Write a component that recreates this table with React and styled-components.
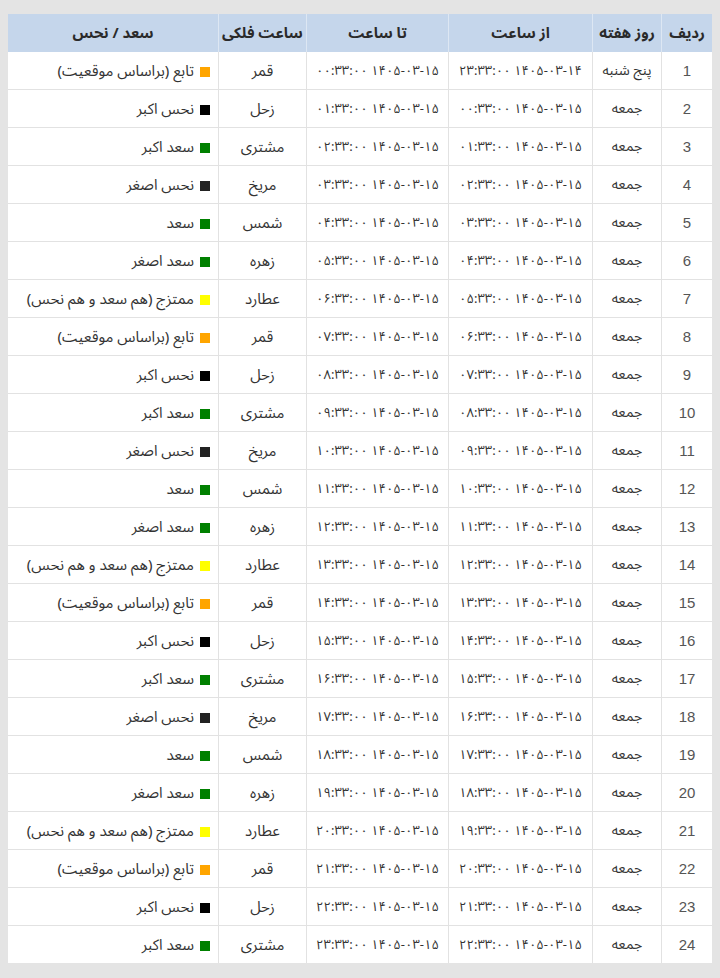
import React from "react";
import styled, { createGlobalStyle } from "styled-components";

const Global = createGlobalStyle`
  html, body { margin: 0; padding: 0; background: #e4e4e4; }
  body { font-family: "Noto Sans Arabic", "DejaVu Sans", sans-serif; }
`;

const Page = styled.div`
  padding: 14px 8px 12px 8px;
  direction: rtl;
`;

const Table = styled.table`
  width: 704px;
  border-collapse: collapse;
  table-layout: fixed;
  background: #ffffff;
  color: #333;
  font-size: 14px;
`;

const Th = styled.th`
  width: ${(p) => (p.$w ? `${p.$w}px` : "auto")};
  height: 38px;
  padding: 0;
  background: #c5d6eb;
  font-weight: bold;
  font-size: 15px;
  color: #2a2a2a;
  text-align: center;
  border-left: 1px solid #dde7f3;
  &:last-child { border-left: none; }
`;

const Tr = styled.tr`
  border-bottom: 1px solid #e2e2e2;
  &:last-child { border-bottom: none; }
`;

const Td = styled.td`
  height: 37px;
  padding: 0 ${(p) => (p.$right ? "8px" : "4px")};
  text-align: ${(p) => (p.$right ? "right" : "center")};
  border-left: 1px solid #e2e2e2;
  white-space: nowrap;
  font-family: ${(p) => (p.$latin ? '"Liberation Sans", Arial, sans-serif' : "inherit")};
  font-size: ${(p) => p.$size || 14}px;
  color: ${(p) => (p.$latin ? "#555" : "#333")};
  &:last-child { border-left: none; }
`;

const DateText = styled.span`
  font-size: 13px;
`;

const Swatch = styled.span`
  display: inline-block;
  width: 10px;
  height: 10px;
  margin-left: 6px;
  vertical-align: -1px;
  background: ${(p) => p.$c};
`;

const fa = (s) => String(s).replace(/\d/g, (d) => "۰۱۲۳۴۵۶۷۸۹"[d]);
const pad = (n) => String(n).padStart(2, "0");

const planets = [
  ["قمر", "تابع (براساس موقعیت)", "#ffa500"],
  ["زحل", "نحس اکبر", "#000000"],
  ["مشتری", "سعد اکبر", "#008000"],
  ["مریخ", "نحس اصغر", "#222222"],
  ["شمس", "سعد", "#008000"],
  ["زهره", "سعد اصغر", "#008000"],
  ["عطارد", "ممتزج (هم سعد و هم نحس)", "#ffff00"],
];

const rows = Array.from({ length: 24 }, (_, i) => {
  const fromH = (i + 23) % 24;
  const fromDay = i === 0 ? 14 : 15;
  const [planet, status, color] = planets[i % 7];
  return {
    n: i + 1,
    day: i === 0 ? "پنج شنبه" : "جمعه",
    from: fa(`1405-03-${fromDay} ${pad(fromH)}:33:00`),
    to: fa(`1405-03-15 ${pad(i)}:33:00`),
    planet,
    status,
    color,
  };
});

const cols = [
  ["ردیف", 50],
  ["روز هفته", 68],
  ["از ساعت", 143],
  ["تا ساعت", 141],
  ["ساعت فلکی", 87],
  ["سعد / نحس", 0],
];

export default function App() {
  return (
    <Page>
      <Global />
      <Table>
        <thead>
          <tr>
            {cols.map(([t, w]) => (
              <Th key={t} $w={w}>{t}</Th>
            ))}
          </tr>
        </thead>
        <tbody>
          {rows.map((r) => (
            <Tr key={r.n}>
              <Td $latin $size={15}>{r.n}</Td>
              <Td>{r.day}</Td>
              <Td><DateText>{r.from}</DateText></Td>
              <Td><DateText>{r.to}</DateText></Td>
              <Td $size={15}>{r.planet}</Td>
              <Td $right $size={15}>
                <Swatch $c={r.color} />
                {r.status}
              </Td>
            </Tr>
          ))}
        </tbody>
      </Table>
    </Page>
  );
}
